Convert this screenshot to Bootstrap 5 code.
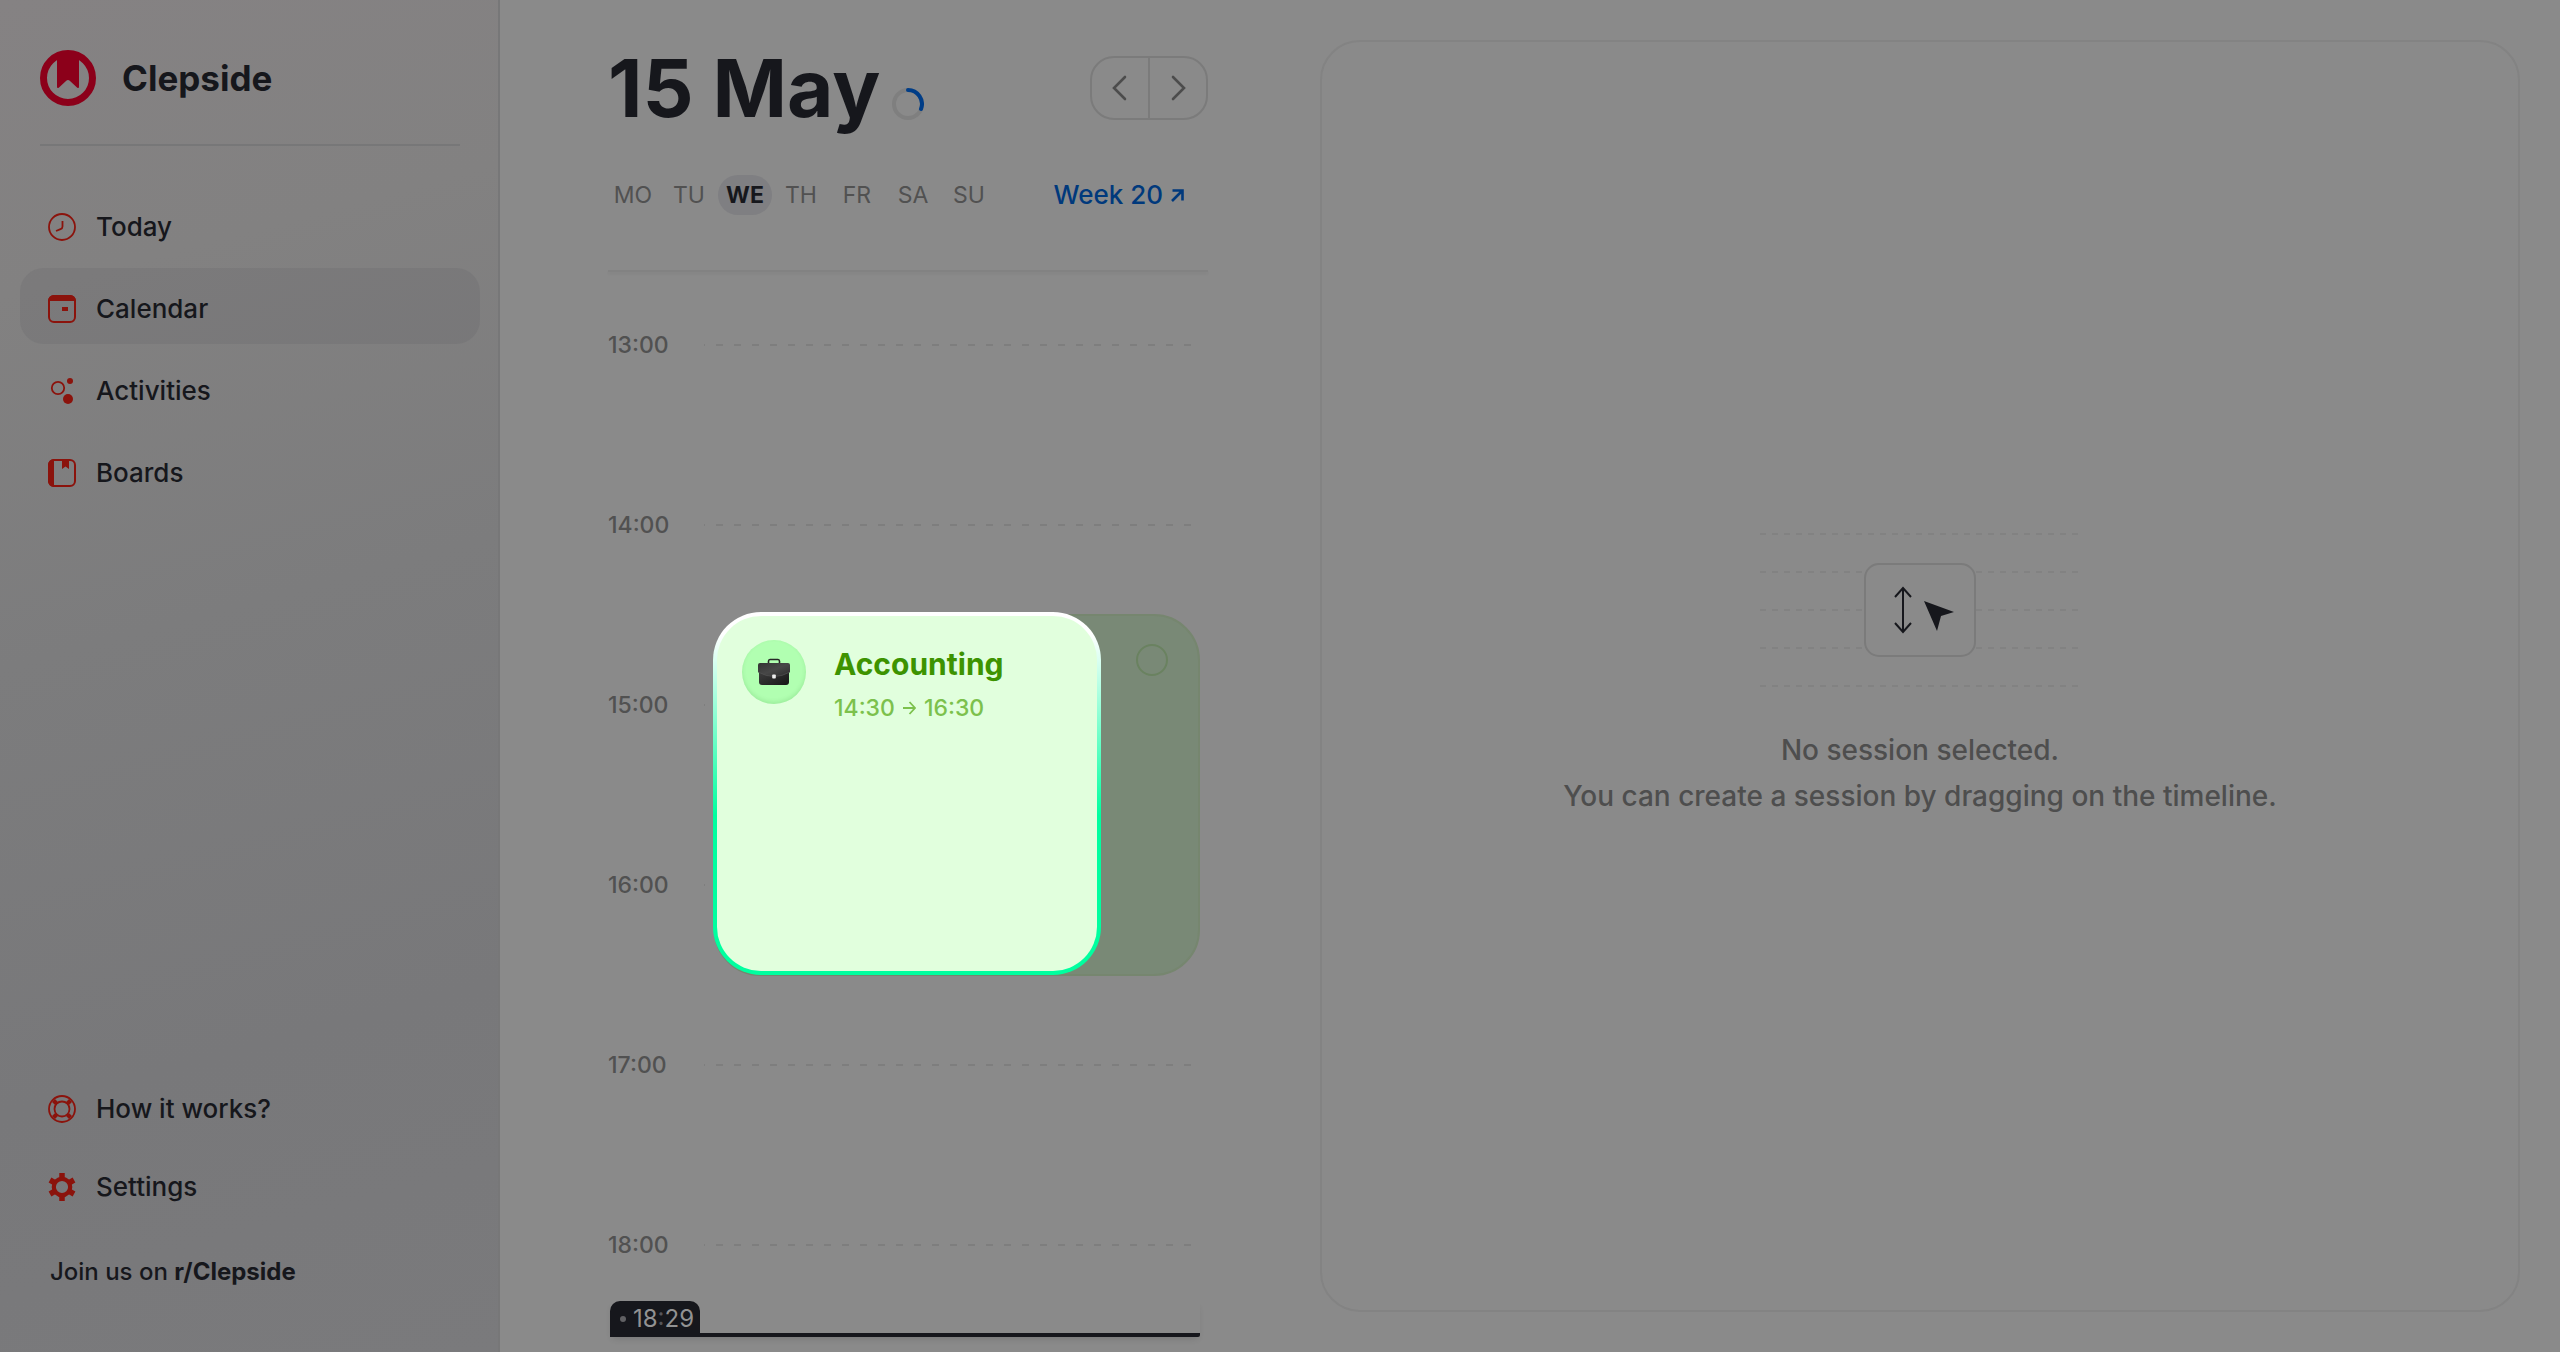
<!DOCTYPE html>
<html lang="en">
<head>
<meta charset="utf-8">
<meta name="viewport" content="width=device-width, initial-scale=1">
<title>Clepside</title>
<link href="https://cdn.jsdelivr.net/npm/bootstrap@5.3.0/dist/css/bootstrap.min.css" rel="stylesheet">
<style>
:root { --ink: #16171c; --dim: #515151; --rule: #7e7e7e; --brand: #8b130c; --link: #00397c; --page: #8a8a8a; --hour: 180px; }
body { font-family: Inter, "Liberation Sans", sans-serif; background: var(--page); color: var(--ink); font-size: 26px; line-height: 36px; font-weight: 500; }
/* sidebar */
.sidebar { width: 500px; padding: 50px 18px 54px 20px; border-right: 2px solid #777778; background: linear-gradient(165deg, #858283 0%, #828181 20%, #7c7c7d 45%, #78787a 75%, #7a7a7c 100%); }
.brand { padding: 0 20px 38px; gap: 26px; font-size: 35px; font-weight: 700; line-height: 56px; }
.brand-rule { height: 2px; margin: 0 20px; background: #777778; }
.side-nav { gap: 6px; }
.side-main { margin-top: 40px; }
.side-nav .nav-link { display: flex; align-items: center; gap: 20px; height: 76px; padding: 5px 28px 0; border-radius: 24px; color: var(--ink); }
.side-nav .nav-link.active { background: rgba(85, 84, 92, .16); }
.side-nav svg { color: var(--brand); flex: none; }
.side-tools { gap: 2px; }
.community { font-size: 24px; padding: 0 30px 8px; margin-top: 32px; color: var(--ink); text-decoration: none; }
/* day column */
.board { padding: 40px 40px 0 108px; gap: 112px; }
.day { width: 600px; }
.day-title { font-size: 80px; line-height: 96px; font-weight: 700; margin: 0; }
.day-head { gap: 12px; }
.pager { border: 2px solid #7b7b7b; border-radius: 24px; height: 64px; width: 118px; overflow: hidden; }
.pager .btn { border: 0; border-radius: 0; padding: 0; color: #4c4c4c; }
.pager .btn + .btn { border-left: 2px solid #7b7b7b; }
.weekbar { margin-top: 39px; height: 40px; }
.weekdays { gap: 2px; margin-left: -2px; }
.weekdays .btn { width: 54px; height: 40px; padding: 0; border: 0; border-radius: 20px; font-size: 23px; line-height: 40px; color: var(--dim); font-weight: 400; }
.weekdays .btn.active { background: #7f7f82; color: var(--ink); font-weight: 700; }
.week-link { color: var(--link); text-decoration: none; gap: 8px; padding-right: 24px; line-height: 36px; }
.day-rule { height: 2px; margin: 55px 0 2px; background: #828282; box-shadow: 0 2px 3px rgba(0, 0, 0, .05); }
/* timeline */
.timeline { padding-top: 57px; min-height: 0; }
.hour { height: var(--hour); font-size: 23px; line-height: 28px; color: var(--dim); }
.hour time { width: 96px; }
.hour-line { height: 2px; margin: 13px 8px 0 0; background: repeating-linear-gradient(90deg, var(--rule) 0 1px, transparent 1px 12px, var(--rule) 12px 18px); }
.slot { left: 106px; right: 8px; border-radius: 46px; background: #798976; border: 2px solid #76866f; }
.slot-check { appearance: none; width: 32px; height: 32px; margin: 28px 30px; border: 2px solid #6a8260; border-radius: 50%; background: transparent; }
.focus-card { left: 105px; width: 388px; border: 4px solid transparent; border-radius: 48px; padding: 24px 25px; gap: 28px; text-align: left; color: #3d9300;
  background: linear-gradient(#e1ffdd, #e1ffdd) padding-box, linear-gradient(#fff 6%, #00ff9f 56%) border-box; }
.focus-icon { width: 64px; height: 64px; border-radius: 50%; background: #b1ffb1; box-shadow: inset 0 -2px 4px rgba(0, 100, 0, .12); flex: none; }
.focus-name { font-size: 30px; line-height: 36px; font-weight: 700; margin: 6px 0 10px; }
.focus-time { font-size: 23px; line-height: 32px; color: #7cc14c; gap: 8px; }
.now { left: 2px; right: 8px; border-bottom: 4px solid var(--ink); border-radius: 0 0 2px 0; box-shadow: 0 4px 6px -2px rgba(0, 0, 0, .12); }
.now-tag { gap: 7px; height: 32px; padding: 3px 6px 0 10px; border-radius: 10px 10px 0 0; background: var(--ink); color: #929292; font-size: 24px; line-height: 32px; font-weight: 400; }
.now-dot { width: 6px; height: 6px; border-radius: 50%; background: #616164; }
.now-tag i { font-style: normal; color: #55555a; }
/* session panel */
.session { border: 2px solid #838383; border-radius: 40px; margin-bottom: 40px; }
.session svg { color: var(--ink); }
.session p { margin: 39px 0 2px; font-size: 28px; line-height: 46px; color: #4e4e4e; }
</style>
</head>
<body>
<div class="d-flex vh-100 overflow-hidden">
  <aside class="sidebar d-flex flex-column flex-shrink-0">
    <div class="brand d-flex align-items-center">
      <svg width="56" height="56" viewBox="0 0 56 56" aria-hidden="true"><circle cx="28" cy="28" r="24.5" fill="none" stroke="#8c001a" stroke-width="7"/><path d="M17 4h22v32.500q0 2.500-2 1l-7-6.500q-2-2-4 0l-7 6.500q-2 1.500-2-1z" fill="#8c001a"/></svg>
      <span>Clepside</span>
    </div>
    <div class="brand-rule"></div>
    <nav class="side-nav side-main nav flex-column">
      <a class="nav-link" href="#today"><svg width="28" height="28" viewBox="0 0 28 28" fill="none" stroke="currentColor" stroke-width="1.800"><circle cx="14" cy="14" r="13"/><path d="M14.500 8v5.500q0 2-2 2.700L8 18"/></svg>Today</a>
      <a class="nav-link active" href="#calendar" aria-current="page"><svg width="28" height="28" viewBox="0 0 28 28"><rect x="1" y="1" width="26" height="26" rx="5" fill="none" stroke="currentColor" stroke-width="2"/><path d="M0 6a6 6 0 0 1 6-6h16a6 6 0 0 1 6 6zM14 12h6v4h-6z" fill="currentColor"/></svg>Calendar</a>
      <a class="nav-link" href="#activities"><svg width="28" height="28" viewBox="0 0 28 28" fill="currentColor"><circle cx="10" cy="11" r="6.200" fill="none" stroke="currentColor" stroke-width="1.800"/><circle cx="22" cy="4" r="3"/><circle cx="20" cy="22" r="5"/></svg>Activities</a>
      <a class="nav-link" href="#boards"><svg width="28" height="28" viewBox="0 0 28 28"><rect x="1" y="1" width="26" height="26" rx="5" fill="none" stroke="currentColor" stroke-width="2"/><path d="M6 0v28a6 6 0 0 1-6-6V6a6 6 0 0 1 6-6zM14 1h7v9l-3.500-2.500L14 10z" fill="currentColor"/></svg>Boards</a>
    </nav>
    <nav class="side-nav side-tools nav flex-column mt-auto">
      <a class="nav-link" href="#help"><svg width="28" height="28" viewBox="0 0 28 28" fill="none" stroke="currentColor" stroke-width="1.800"><circle cx="14" cy="14" r="13"/><circle cx="14" cy="14" r="7.500"/><path stroke-width="4.200" d="m5.500 5.500 3 3m11 11 3 3m0-17-3 3m-11 11-3 3"/></svg>How it works?</a>
      <a class="nav-link" href="#settings"><svg width="28" height="28" viewBox="0 0 28 28" fill="none" stroke="currentColor"><circle cx="14" cy="14" r="8.200" stroke-width="4.200"/><path stroke-width="5.500" stroke-linejoin="round" d="M14 0v5m0 18v5M2 7l4.300 2.500M21.700 18.500 26 21M2 21l4.300-2.500M21.700 9.500 26 7"/></svg>Settings</a>
    </nav>
    <a class="community" href="#community">Join us on <b>r/Clepside</b></a>
  </aside>

  <main class="board d-flex flex-grow-1">
    <section class="day d-flex flex-column flex-shrink-0">
      <header class="d-flex justify-content-between flex-shrink-0">
        <div class="day-head d-flex align-items-start">
          <h1 class="day-title">15 May</h1>
          <svg class="mt-5" width="32" height="32" viewBox="0 0 32 32" fill="none" stroke-width="4" role="img" aria-label="Loading"><circle cx="16" cy="16" r="14" stroke="#7f7f7f"/><path d="M16 2a14 14 0 0 1 13 19" stroke="#003d87" stroke-linecap="round"/></svg>
        </div>
        <div class="pager d-flex mt-3" role="group" aria-label="Change day">
          <button type="button" class="btn flex-fill" aria-label="Previous day"><svg width="16" height="26" viewBox="0 0 16 26" fill="none" stroke="currentColor" stroke-width="2.600" stroke-linecap="round"><path d="M13 2 2 13l11 11"/></svg></button>
          <button type="button" class="btn flex-fill" aria-label="Next day"><svg width="16" height="26" viewBox="0 0 16 26" fill="none" stroke="currentColor" stroke-width="2.600" stroke-linecap="round"><path d="m3 2 11 11L3 24"/></svg></button>
        </div>
      </header>
      <div class="weekbar d-flex justify-content-between align-items-center flex-shrink-0">
        <div class="weekdays d-flex">
          <button type="button" class="btn">MO</button><button type="button" class="btn">TU</button><button type="button" class="btn active">WE</button><button type="button" class="btn">TH</button><button type="button" class="btn">FR</button><button type="button" class="btn">SA</button><button type="button" class="btn">SU</button>
        </div>
        <a class="week-link d-flex align-items-center" href="#week">Week 20 <svg width="13" height="13" viewBox="0 0 13 13" fill="none" stroke="currentColor" stroke-width="2.600"><path d="M1.500 1.500h10v10M11 2 1 12"/></svg></a>
      </div>
      <div class="day-rule flex-shrink-0"></div>
      <div class="timeline flex-grow-1">
        <div class="position-relative">
          <div class="hour d-flex"><time>13:00</time><div class="hour-line flex-grow-1"></div></div>
          <div class="hour d-flex"><time>14:00</time><div class="hour-line flex-grow-1"></div></div>
          <div class="hour d-flex"><time>15:00</time><div class="hour-line flex-grow-1"></div></div>
          <div class="hour d-flex"><time>16:00</time><div class="hour-line flex-grow-1"></div></div>
          <div class="hour d-flex"><time>17:00</time><div class="hour-line flex-grow-1"></div></div>
          <div class="hour d-flex"><time>18:00</time><div class="hour-line flex-grow-1"></div></div>
          <div class="slot position-absolute d-flex justify-content-end" style="top:283px;height:362px"><input type="checkbox" class="slot-check" aria-label="Mark Accounting as done"></div>
          <article class="focus-card position-absolute d-flex align-items-start" style="top:281px;height:363px">
            <div class="focus-icon d-flex align-items-center justify-content-center">
              <svg width="32" height="28" viewBox="0 0 32 28" aria-hidden="true"><defs><linearGradient id="bag" x1="0" y1="0" x2="1" y2="1"><stop stop-color="#444"/><stop offset="1" stop-color="#161616"/></linearGradient><linearGradient id="flap" x1="0" y1="0" x2="1" y2="1"><stop stop-color="#333"/><stop offset=".5" stop-color="#474747"/><stop offset="1" stop-color="#2c2c2c"/></linearGradient></defs><path d="M10.500 6V3.200Q10.500 1.500 12 1.500h8q1.500 0 1.500 1.700V6" fill="none" stroke="#262626" stroke-width="1.600"/><rect x="1" y="9" width="30" height="18" rx="3" fill="url(#bag)"/><path d="M0 7q0-2 2-2h28q2 0 2 2v7q-16 9-32 0z" fill="url(#flap)"/><path d="M0 14q16 9 32 0" fill="none" stroke="#555" stroke-width=".6"/><rect x="14.200" y="16.500" width="3.600" height="4" rx=".8" fill="#eee"/></svg>
            </div>
            <div>
              <h2 class="focus-name">Accounting</h2>
              <div class="focus-time d-flex align-items-center"><span>14:30</span><svg width="13" height="14" viewBox="0 0 13 14" fill="none" stroke="currentColor" stroke-width="1.800" aria-label="to"><path d="M0 7h12M6.500 1l5.500 6-5.500 6"/></svg><span>16:30</span></div>
            </div>
          </article>
          <div class="now position-absolute d-flex" style="top:970px"><div class="now-tag d-flex align-items-center"><span class="now-dot"></span><span>18<i>:</i>29</span></div></div>
        </div>
      </div>
    </section>

    <section class="session flex-grow-1 d-flex flex-column align-items-center justify-content-center text-center">
      <svg width="320" height="156" viewBox="0 0 320 156" aria-hidden="true"><path d="M0 2h320M0 40h320M0 78h320M0 116h320M0 154h320" stroke="#828282" stroke-width="2" stroke-dasharray="6 6"/><rect x="105" y="32" width="110" height="92" rx="14" fill="#8a8a8a" stroke="#7b7b7b" stroke-width="2"/><path d="M143 57v42M135 65l8-9 8 9M135 91l8 9 8-9" fill="none" stroke="currentColor" stroke-width="2"/><path d="m164 69 30 11-13 4-4 15z" fill="currentColor"/></svg>
      <p>No session selected.<br>You can create a session by dragging on the timeline.</p>
    </section>
  </main>
</div>
<script src="https://cdn.jsdelivr.net/npm/bootstrap@5.3.0/dist/js/bootstrap.bundle.min.js"></script>
</body>
</html>
